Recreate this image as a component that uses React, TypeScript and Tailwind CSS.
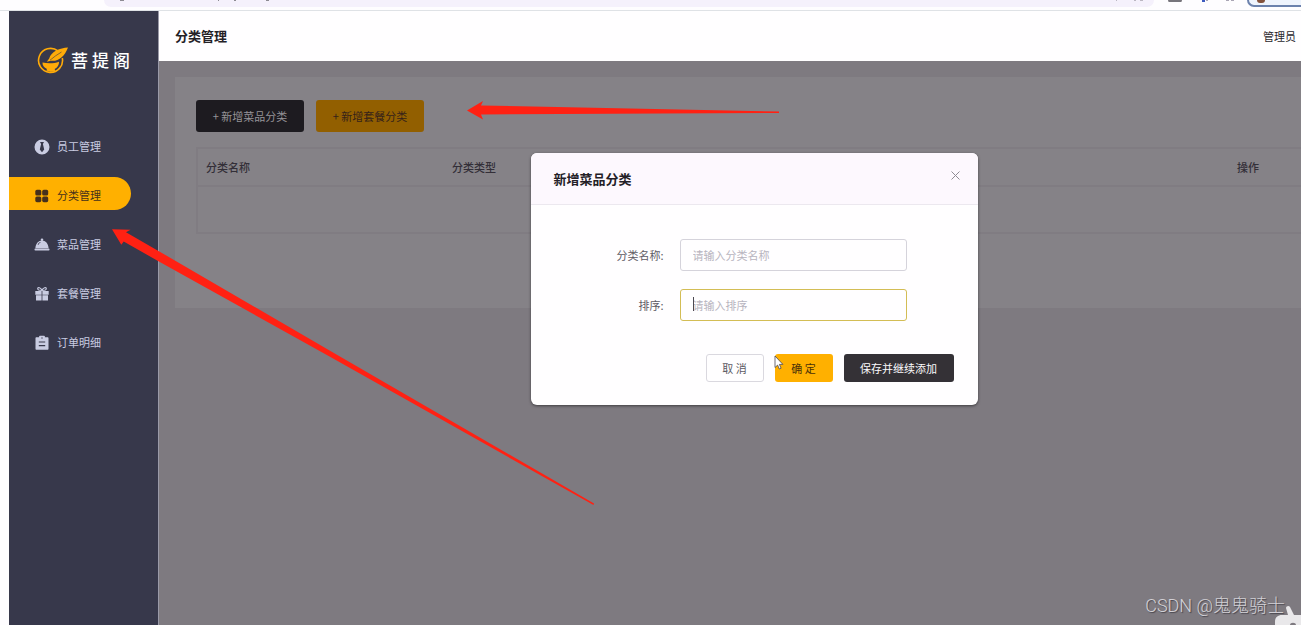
import { ReactNode, useState } from "react";
import clsx from "clsx";

interface NavItemProps {
  name: string;
  href: string;
  icon: ReactNode;
}

const navItems: NavItemProps[] = [
  {
    name: "员工管理",
    href: "#employee",
    icon: (
      <svg viewBox="0 0 16 16" className="size-4" fill="currentColor">
        <path
          fillRule="evenodd"
          d="M8 .5a7.5 7.5 0 1 0 0 15 7.5 7.5 0 0 0 0-15ZM6 3h4l-1.100 2 1.300 5.500L8 13.200l-2.200-2.700L7.100 5Z"
        />
      </svg>
    ),
  },
  {
    name: "分类管理",
    href: "#category",
    icon: (
      <svg viewBox="0 0 16 16" className="size-4" fill="currentColor">
        <rect x="1.3" y="1.8" width="6" height="5.8" rx="1.6" />
        <rect x="8.2" y="1.8" width="6" height="5.8" rx="1.6" />
        <rect x="1.3" y="8.4" width="6" height="5.8" rx="1.6" />
        <rect x="8.2" y="8.4" width="6" height="5.8" rx="1.6" />
      </svg>
    ),
  },
  {
    name: "菜品管理",
    href: "#dish",
    icon: (
      <svg viewBox="0 0 16 16" className="size-4" fill="currentColor">
        <circle cx="8" cy="2.8" r="1.3" />
        <path
          fillRule="evenodd"
          d="M1.4 11.2C1.7 6.4 4.5 3.4 8 3.4s6.3 3 6.6 7.8ZM3.6 7.7l.6.3c.5-1.2 1.3-2 2.4-2.6l-.3-.5C5 5.4 4.1 6.4 3.6 7.7Z"
        />
        <rect x="0.5" y="11.6" width="15" height="1.9" rx="0.8" />
      </svg>
    ),
  },
  {
    name: "套餐管理",
    href: "#setmeal",
    icon: (
      <svg viewBox="0 0 16 16" className="size-4" fill="currentColor">
        <path
          d="M8 4.5C6.800 1.200 3.600 1 3.700 2.800 3.800 4.100 6 4.500 8 4.500ZM8 4.500C9.200 1.200 12.400 1 12.300 2.800 12.200 4.100 10 4.500 8 4.500Z"
          fill="none"
          stroke="currentColor"
          strokeWidth="1.1"
        />
        <path d="M1.300 5h6.300v3.700H1.300ZM8.400 5h6.300v3.700H8.400ZM2 9.200h5.600v5.200H2ZM8.400 9.200H14v5.200H8.400Z" />
      </svg>
    ),
  },
  {
    name: "订单明细",
    href: "#order",
    icon: (
      <svg viewBox="0 0 16 16" className="size-4" fill="currentColor">
        <path
          fillRule="evenodd"
          d="M2.500 2.200h2.600V1.500c0-.5.400-.8.800-.8h4.200c.4 0 .8.300.8.800v.7h2.600c.6 0 1 .4 1 1v10.500c0 .6-.4 1-1 1h-11c-.6 0-1-.4-1-1V3.200c0-.6.400-1 1-1ZM7.300 2.500v1h1.400v-1ZM4.800 6.500v1.100h6.400V6.500ZM4.800 10v1.200h6.400V10Z"
        />
      </svg>
    ),
  },
];

function BrowserEdge() {
  return (
    <div className="flex h-[11px] items-start border-b border-[#dfe2e6] bg-[#fefdff] pl-[104px]">
      <div className="flex h-[7px] flex-1 justify-between rounded-b-full bg-[#f5f1fc] pr-2 pl-4">
        <svg viewBox="0 0 160 2" className="h-[2px] w-40" fill="#8d8b93">
          <path d="M0 0h4v1H0ZM98 0h1v1h-1ZM114 0h2v1h-2ZM146 0h3v1h-3Z" />
        </svg>
        <svg viewBox="0 0 32 2" className="h-[2px] w-8" fill="#bbb7c2">
          <path d="M2 0h1v1H2ZM20 0h2v1h-2ZM26 0h3v1h-3Z" />
        </svg>
      </div>
      <svg viewBox="0 0 93 7" className="h-[7px] w-[93px]">
        <path d="M14 0h14q0 2-1 2H15q-1 0-1-2Z" fill="#77757c" />
        <path d="M48 0h3v2h-3Z" fill="#3d5bc0" />
        <path d="M52 0h2v1h-2ZM72 0h3v1h-3ZM77 0h3v1h-3Z" fill="#aaa6b5" />
      </svg>
      <div className="flex h-[7px] w-[54px] justify-start rounded-bl-full border-b-2 border-l-2 border-[#6c82ad] bg-[#eff4fd] pl-2">
        <div className="h-[3px] w-2 rounded-b-full bg-[#83523d]" />
      </div>
    </div>
  );
}

function Logo() {
  return (
    <div className="flex items-center gap-[3px] pt-[35px] pl-7">
      <svg viewBox="0 0 31 28" className="h-7 w-[31px]">
        <path
          d="M21 5A12 12 0 1 0 25.300 12"
          fill="none"
          stroke="#ffab08"
          strokeWidth="1.6"
        />
        <path
          d="M31 1.500C23 2 14 5.500 12.200 12.500L9.800 15.800 14 14.800C22 15.500 27.500 10.500 31 1.500Z"
          fill="#ffab08"
        />
        <path d="M13 14.200Q18.500 9.500 24.500 6" stroke="#37384b" strokeWidth="0.6" fill="none" />
        <path
          d="M5.500 16.500c5 1.200 11.500 1.200 16.500-.7.200 3.300-1.500 5.700-4.300 7.200l.5 1.700c-3 1.500-6 1.300-8.900-.1l.7-1.600c-3-1.400-4.700-3.600-4.500-6.500Z"
          fill="#ffab08"
        />
      </svg>
      <div className="flex gap-1 text-[17px] leading-6 font-medium text-white">
        <span>菩</span>
        <span>提</span>
        <span>阁</span>
      </div>
    </div>
  );
}

function Sidebar() {
  const [active, setActive] = useState("分类管理");

  return (
    <aside className="w-[150px] shrink-0 border-r border-[#9a9aa8] bg-[#37384b]">
      <Logo />
      <nav className="pt-[54px]">
        <ul className="flex flex-col gap-4">
          {navItems.map((item) => (
            <li key={item.name}>
              <a
                href={item.href}
                onClick={() => setActive(item.name)}
                className={clsx(
                  "mr-[27px] flex h-[33px] items-center gap-[7px] rounded-r-full pt-1 pl-[25px] text-[11px]",
                  active === item.name
                    ? "bg-[#ffb000] text-[#45301c]"
                    : "text-[#c9cce2]"
                )}
              >
                {item.icon}
                <span>{item.name}</span>
              </a>
            </li>
          ))}
        </ul>
      </nav>
    </aside>
  );
}

function CategoryCard() {
  return (
    <section className="ml-4 min-h-[231px] bg-[#858287] pt-[23px] pl-[21px]">
      <div className="flex gap-3">
        <button className="h-8 w-[108px] rounded-[3px] bg-[#1d1b20] text-[11px] text-[#969398]">
          + 新增菜品分类
        </button>
        <button className="h-8 w-[108px] rounded-[3px] bg-[#925f00] text-[11px] text-[#35221a]">
          + 新增套餐分类
        </button>
      </div>
      <table className="mt-[15px] w-full table-fixed border-y-2 border-l-2 border-[#807c82] text-left text-[11px] text-[#332f38]">
        <thead>
          <tr className="h-[38px] border-b-2 border-[#807c82]">
            <th className="w-[246px] pl-2 font-medium">分类名称</th>
            <th className="pl-[9px] font-medium">分类类型</th>
            <th className="w-[73px] pl-[9px] font-medium">操作</th>
          </tr>
        </thead>
        <tbody>
          <tr className="h-[47px]">
            <td colSpan={3} />
          </tr>
        </tbody>
      </table>
    </section>
  );
}

function CategoryDialog() {
  return (
    <div
      role="dialog"
      aria-labelledby="dialog-title"
      className="w-[447px] rounded-md bg-[#fffeff] shadow-[0_1px_3px_rgba(0,0,0,0.5)]"
    >
      <div className="flex h-[52px] items-center justify-between rounded-t-md border-b border-[#ece8ef] bg-[#fdf8fe] pr-[17px] pl-[23px]">
        <h2 id="dialog-title" className="text-[13px] font-bold text-[#232026]">
          新增菜品分类
        </h2>
        <button aria-label="关闭" className="pb-1.5">
          <svg viewBox="0 0 11 11" className="size-[11px]">
            <path d="M1.5 1.5 9.5 9.5M9.5 1.5 1.5 9.5" stroke="#8f8c94" />
          </svg>
        </button>
      </div>

      <form className="pt-[34px] pb-[23px]" onSubmit={(e) => e.preventDefault()}>
        <div className="flex flex-col gap-[18px] text-[11px] text-[#5d5a63]">
          <div className="flex items-center">
            <label htmlFor="name" className="w-[149px] pr-4 text-right">
              分类名称:
            </label>
            <input
              id="name"
              placeholder="请输入分类名称"
              className="h-8 w-[227px] rounded-[3px] border border-[#d5d3db] px-3 outline-none placeholder:text-[#b7b4be]"
            />
          </div>
          <div className="flex items-center">
            <label htmlFor="sort" className="w-[149px] pr-4 text-right">
              排序:
            </label>
            <div className="relative">
              <input
                id="sort"
                placeholder="请输入排序"
                className="h-8 w-[227px] rounded-[3px] border border-[#d3bd55] px-3 outline-none placeholder:text-[#b7b4be]"
              />
              <span className="absolute top-2 left-[13px] h-[14px] w-px bg-[#4b4850]" />
            </div>
          </div>
        </div>

        <div className="mt-[33px] flex justify-end gap-[11px] pr-6 text-[11px]">
          <button
            type="button"
            className="h-7 w-[58px] rounded-[3px] border border-[#dad8df] text-[#5d5a63]"
          >
            取 消
          </button>
          <button
            type="submit"
            className="relative h-7 w-[58px] rounded-[3px] bg-[#ffb000] text-[#4a3108]"
          >
            确 定
            <svg viewBox="0 0 10 15" className="absolute top-px -left-px h-[15px] w-2.5">
              <path
                d="M1 1v11.5l2.6-2.4 1.7 3.9 1.8-.8-1.7-3.8h3.5Z"
                fill="#fff"
                stroke="#4a4750"
                strokeWidth="0.8"
              />
            </svg>
          </button>
          <button
            type="button"
            className="h-7 w-[110px] rounded-[3px] bg-[#343136] text-[#fbfafc]"
          >
            保存并继续添加
          </button>
        </div>
      </form>
    </div>
  );
}

function Annotations() {
  return (
    <svg
      width="600"
      height="520"
      className="pointer-events-none absolute top-0 left-0 overflow-visible"
      fill="#ff2113"
    >
      <path d="M467 110.5 483 101 481 105.5 779 111.5V113L481 114.5 483 119.5Z" />
      <path d="M112 229.3 130.5 229.7 126 232.2 158 250.7 330 350.7 594 503.5 593.5 505 330 356.7 158 261 123.7 241.5 121.3 244.7Z" />
    </svg>
  );
}

export default function App() {
  return (
    <div className="relative flex min-h-screen flex-col overflow-hidden bg-[#fefdff] font-['Noto_Sans_CJK_SC',sans-serif]">
      <BrowserEdge />
      <div className="flex flex-1 pl-[9px]">
        <Sidebar />
        <div className="flex min-w-0 flex-1 flex-col">
          <header className="flex h-[50px] items-center justify-between bg-[#fffeff] pr-[5px] pl-4">
            <h1 className="text-[13px] font-bold text-[#242126]">分类管理</h1>
            <span className="text-[11px] text-[#29272c]">管理员</span>
          </header>
          <main className="relative flex-1 bg-[#7e7a80] pt-4">
            <CategoryCard />
            <div className="absolute inset-0 flex items-start justify-center pt-[92px] pl-12">
              <CategoryDialog />
            </div>
          </main>
        </div>
      </div>

      <Annotations />

      <p className="absolute right-4 bottom-[7px] font-[Roboto,'Noto_Sans_CJK_SC',sans-serif] text-[18px] leading-6 font-light text-[#d3d1d6] [text-shadow:1px_1px_1px_#48454c]">
        CSDN @鬼鬼骑士
      </p>
      <svg viewBox="0 0 26 20" className="absolute right-0 bottom-0 h-5 w-[26px]">
        <path
          d="M0 20v-3c0-5 3-7 7-7h6L11 3c0-2 3-3 4-1l4 8h7v10h-5c0-3-6-3-6 0Z"
          fill="#e9e8ea"
        />
      </svg>
    </div>
  );
}
